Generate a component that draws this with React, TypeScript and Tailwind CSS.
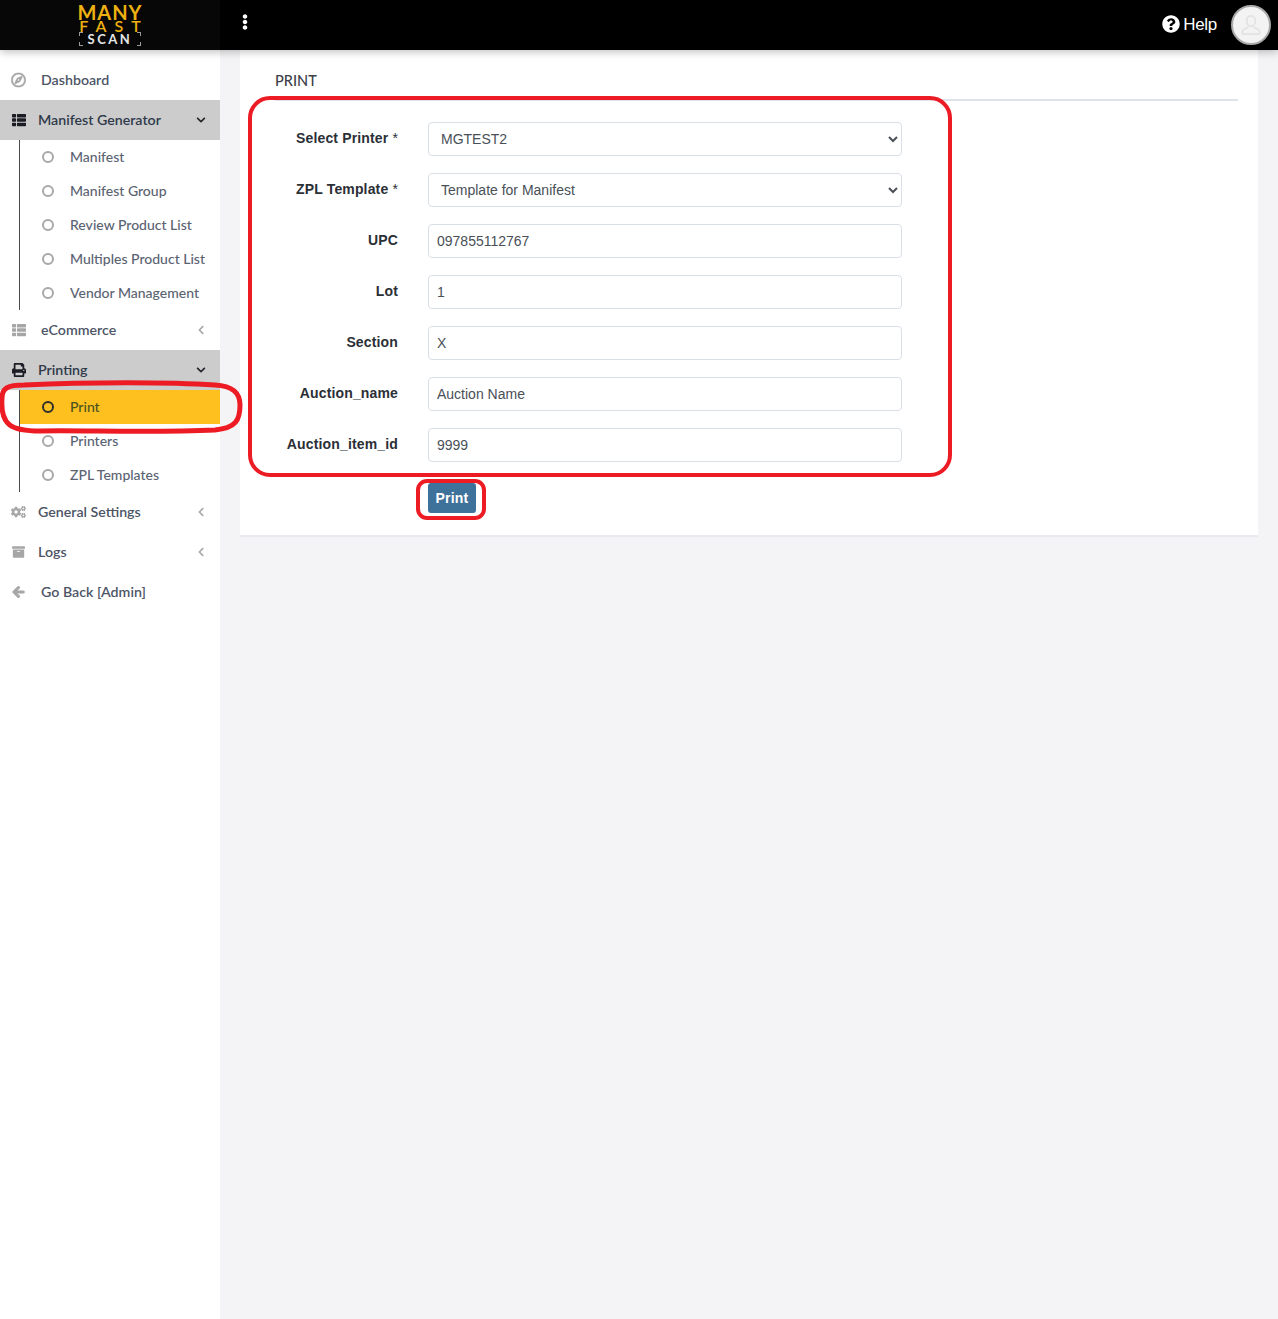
import React from "react";
import { FaRegCompass, FaThList, FaPrint, FaCogs, FaArchive, FaArrowLeft, FaChevronDown, FaChevronLeft, FaQuestionCircle, FaEllipsisV } from "react-icons/fa";

const lato = "font-['Lato','Noto_Sans',sans-serif]";

function Top({ icon, label, open, active, textX = "pl-[38px]", chevron = true }: { icon: React.ReactNode; label: string; open?: boolean; active?: boolean; textX?: string; chevron?: boolean }) {
  return (
    <div className={`relative flex h-10 items-center text-[14.200px] font-semibold ${textX} ${active ? "bg-[#cccccc] text-[#2f3a4a]" : "text-[#4d5566]"}`}>
      <span className={`absolute left-[11px] top-1/2 flex w-[15px] -translate-y-1/2 justify-center ${active ? "text-[#1c1c24]" : "text-[#a6a6a6]"}`}>{icon}</span>
      <span className="-mt-[1px]">{label}</span>
      {chevron && (
        <span className={`absolute right-[14px] top-1/2 -translate-y-1/2 ${open ? "text-[#23232b]" : "text-[#a6a6a6]"}`}>
          {open ? <FaChevronDown size={10} /> : <FaChevronLeft size={10} />}
        </span>
      )}
    </div>
  );
}

function Sub({ label, active }: { label: string; active?: boolean }) {
  return (
    <div className={`flex h-[34px] items-center pl-[22px] text-[14px] font-medium ${active ? "bg-[#fdc01f] text-[#4b5320]" : "text-[#5b6372]"}`}>
      <span className={`h-3 w-3 rounded-full border-2 ${active ? "border-[#2e2e2e]" : "border-[#a8a8a8]"}`} />
      <span className="-mt-[2px] ml-[16px]">{label}</span>
    </div>
  );
}

function SubGroup({ children }: { children: React.ReactNode }) {
  return <div className="ml-[19px] border-l border-[#4a4a4a]">{children}</div>;
}

function Row({ label, req, children }: { label: string; req?: boolean; children: React.ReactNode }) {
  return (
    <div className="flex h-[34px] items-center">
      <label className="w-[123px] pb-[1px] text-right text-[14px] font-bold tracking-[0.15px] text-[#2b2f36]">
        {label}
        {req && <span className="font-normal"> *</span>}
      </label>
      <div className="ml-[30px] w-[474px]">{children}</div>
    </div>
  );
}

const field = "h-[34px] w-full rounded-[4px] border border-[#d9dfe8] bg-white pl-2 pr-[9px] text-[14px] text-[#495057] outline-none";

function Field({ value }: { value: string }) {
  return <input readOnly value={value} className={field} />;
}

function Pick({ value }: { value: string }) {
  return (
    <select defaultValue={value} className={field}>
      <option>{value}</option>
    </select>
  );
}

function Corner({ at }: { at: string }) {
  return <span className={`absolute h-[4px] w-[4px] border-[#9a9a9a] ${at}`} />;
}

export default function App() {
  return (
    <div className="relative flex min-h-[1319px] flex-col bg-[#f4f4f6] font-['Liberation_Sans',Arial,sans-serif]">
      <header className="relative z-10 flex h-[50px] items-center bg-black text-white shadow-[0_2px_8px_rgba(0,0,0,0.25)]">
        <div className={`flex h-full w-[220px] flex-col items-center justify-center bg-[#070707] ${lato}`}>
          <div className="flex flex-col items-center">
            <span className="text-[20px] font-bold leading-[16px] tracking-[1px] text-[#eeb111]">MANY</span>
            <span className="pl-[8px] text-[16px] font-semibold leading-[12px] tracking-[8px] text-[#eeb111]">FAST</span>
            <span className="relative flex h-[14px] w-[62px] items-center justify-center text-[13px] font-bold leading-[14px] tracking-[2.500px] text-[#e6e6e6]">
              SCAN
              <Corner at="left-0 top-0 border-l border-t" />
              <Corner at="right-0 top-0 border-r border-t" />
              <Corner at="bottom-0 left-0 border-b border-l" />
              <Corner at="bottom-0 right-0 border-b border-r" />
            </span>
          </div>
        </div>
        <FaEllipsisV size={16} className="-mt-[6px] ml-[17px]" />
        <div className="ml-auto flex items-center">
          <FaQuestionCircle size={18} className="-mt-[3px]" />
          <span className="ml-[3px] text-[17px] tracking-[-0.3px]">Help</span>
          <div className="ml-[14px] mr-[7px] flex h-10 w-10 items-center justify-center rounded-full border-2 border-[#a9a9a9] bg-[#f3f3f3]">
            <svg viewBox="0 0 24 24" width="26" height="26" fill="none" stroke="#e2e2e2" strokeWidth="1.6">
              <path d="M12 3.5c-2.6 0-4 2-4 4.5s1.4 5 4 5 4-2.500 4-5-1.400-4.500-4-4.500z" />
              <path d="M9.500 13.500c-.3 1.500-5.500 2-5.500 4.500v1.500c0 .6.400 1 1 1h14c.6 0 1-.4 1-1V18c0-2.500-5.200-3-5.500-4.500" />
            </svg>
          </div>
        </div>
      </header>

      <div className="flex flex-1">
        <aside className={`w-[220px] shrink-0 bg-white pt-[10px] ${lato}`}>
          <Top icon={<FaRegCompass size={15} stroke="currentColor" strokeWidth={18} />} label="Dashboard" textX="pl-[41px]" chevron={false} />
          <Top icon={<FaThList size={14} />} label="Manifest Generator" open active />
          <SubGroup>
            <Sub label="Manifest" />
            <Sub label="Manifest Group" />
            <Sub label="Review Product List" />
            <Sub label="Multiples Product List" />
            <Sub label="Vendor Management" />
          </SubGroup>
          <Top icon={<FaThList size={14} />} label="eCommerce" textX="pl-[41px]" />
          <Top icon={<FaPrint size={14} />} label="Printing" open active />
          <SubGroup>
            <Sub label="Print" active />
            <Sub label="Printers" />
            <Sub label="ZPL Templates" />
          </SubGroup>
          <Top icon={<FaCogs size={16} />} label="General Settings" />
          <Top icon={<FaArchive size={13} />} label="Logs" />
          <Top icon={<FaArrowLeft size={13} stroke="currentColor" strokeWidth={40} />} label="Go Back [Admin]" textX="pl-[41px]" chevron={false} />
        </aside>

        <main className="flex-1 pl-[20px] pr-[20px]">
          <section className="h-[487px] border-b-2 border-[#e8eaef] bg-white pl-[35px] pr-[20px]">
            <h1 className={`flex h-[51px] items-end border-b-2 border-[#dee2ea] pb-[7px] text-[14.500px] font-medium text-[#3d3f49] ${lato}`}>PRINT</h1>
            <form className="flex w-[627px] flex-col gap-[17px] pt-[21px]">
              <Row label="Select Printer" req><Pick value="MGTEST2" /></Row>
              <Row label="ZPL Template" req><Pick value="Template for Manifest" /></Row>
              <Row label="UPC"><Field value="097855112767" /></Row>
              <Row label="Lot"><Field value="1" /></Row>
              <Row label="Section"><Field value="X" /></Row>
              <Row label="Auction_name"><Field value="Auction Name" /></Row>
              <Row label="Auction_item_id"><Field value="9999" /></Row>
              <div className="mt-[4px] pl-[153px]">
                <button type="button" className="h-[30px] w-[48px] rounded-[3px] bg-[#3f729b] text-[14px] font-bold tracking-[0.2px] text-white">Print</button>
              </div>
            </form>
          </section>
        </main>
      </div>

      <svg className="pointer-events-none absolute left-0 top-0 z-20" width="1278" height="560" fill="none" stroke="#ed1c24" strokeWidth="4">
        <rect x="250" y="98" width="700" height="377" rx="20" />
        <rect x="418" y="481" width="66" height="37" rx="9" />
        <path strokeWidth="5" d="M2 398 C2 388 8 385 24 385 C90 382 170 382 215 385 C232 386 240 392 240 405 C240 420 236 428 215 430 C150 433 80 430 40 431 C12 431 0 426 2 398 Z" />
      </svg>
    </div>
  );
}
